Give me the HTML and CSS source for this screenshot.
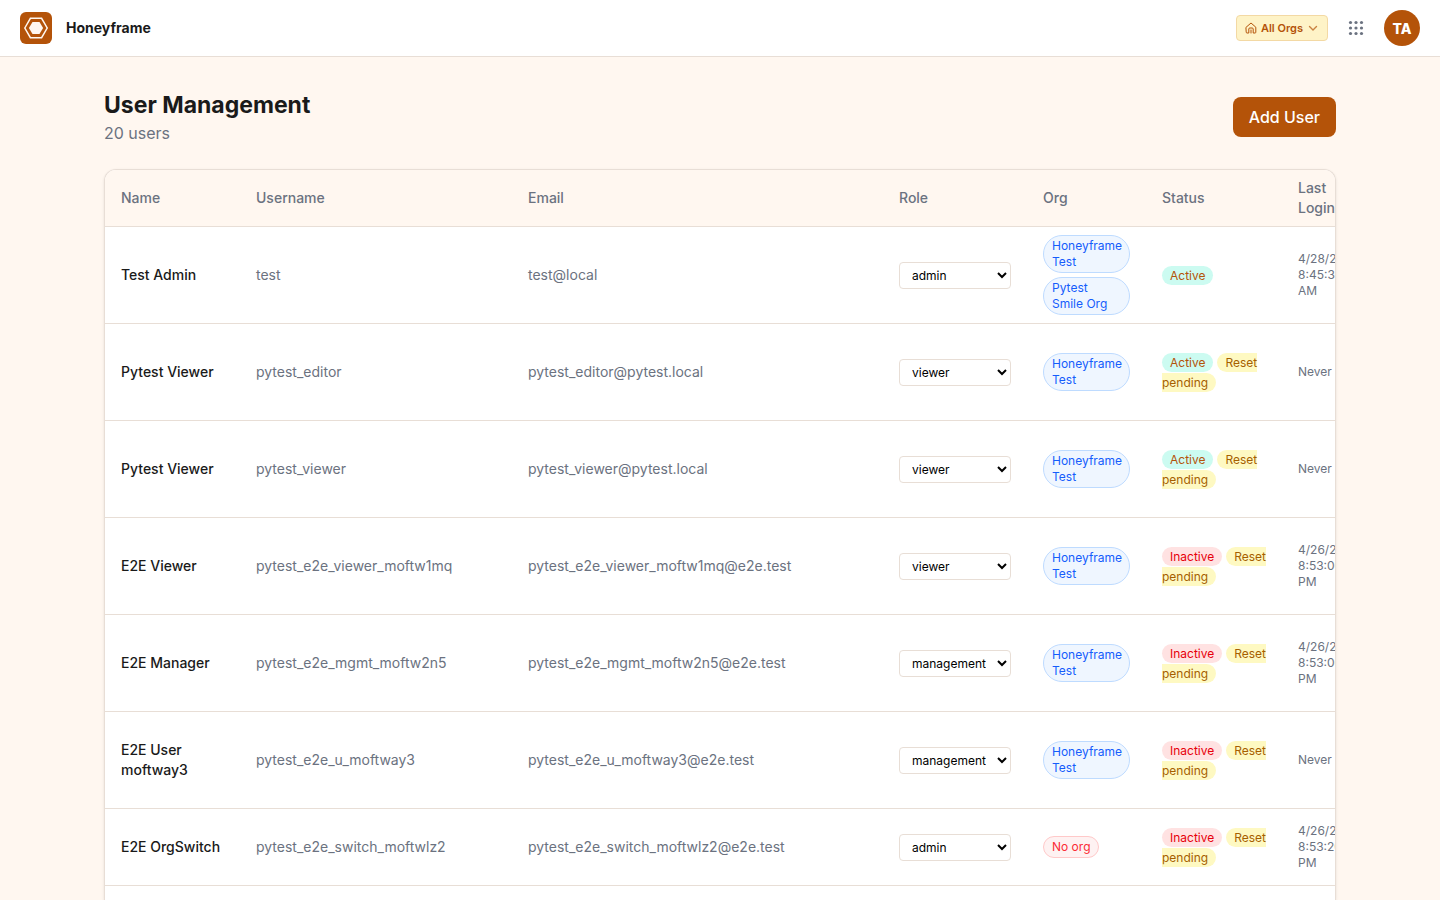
FILE: index.html
```html
<!DOCTYPE html>
<html lang="en">
<head>
<meta charset="utf-8">
<meta name="viewport" content="width=device-width, initial-scale=1">
<title>User Management</title>
<link rel="stylesheet" href="styles.css">
</head>
<body>
<header class="topbar">
  <div class="brand">
    <svg class="logo" viewBox="0 0 32 32" aria-hidden="true">
      <rect width="32" height="32" rx="6" fill="#b45309"/>
      <path d="M4.8 16 10.4 6.3H21.6L27.2 16 21.6 25.7H10.4Z" fill="none" stroke="#fff7f0" stroke-width="1.500"/>
      <path d="M8.9 16 12.5 10H19.5L23.1 16 19.5 22H12.5Z" fill="#fff7f0"/>
    </svg>
    <span class="brand-name">Honeyframe</span>
  </div>
  <div class="tools">
    <button class="org-switch" type="button">
      <svg class="icon" viewBox="0 0 12 12" fill="none" stroke="currentColor" stroke-linecap="round" stroke-linejoin="round" aria-hidden="true"><path d="M1.200 5.200 6 1l4.800 4.200V10.300a.7.7 0 0 1-.7.7H8.200V7a1 1 0 0 0-1-1H4.800a1 1 0 0 0-1 1v4H1.900a.7.7 0 0 1-.7-.7ZM6 8v3"/></svg>
      <span>All Orgs</span>
      <svg class="icon chevron" viewBox="0 0 12 12" fill="none" stroke="currentColor" stroke-width="1.400" stroke-linecap="round" stroke-linejoin="round" aria-hidden="true"><path d="m2.500 4.500 3.500 3.500 3.500-3.500"/></svg>
    </button>
    <button class="apps" type="button" aria-label="Apps">
      <svg viewBox="0 0 20 20" fill="currentColor" aria-hidden="true"><circle cx="4.500" cy="4.500" r="1.600"/><circle cx="10" cy="4.500" r="1.600"/><circle cx="15.500" cy="4.500" r="1.600"/><circle cx="4.500" cy="10" r="1.600"/><circle cx="10" cy="10" r="1.600"/><circle cx="15.500" cy="10" r="1.600"/><circle cx="4.500" cy="15.500" r="1.600"/><circle cx="10" cy="15.500" r="1.600"/><circle cx="15.500" cy="15.500" r="1.600"/></svg>
    </button>
    <button class="avatar" type="button">TA</button>
  </div>
</header>
<main class="page">
  <div class="page-head">
    <div>
      <h1>User Management</h1>
      <p class="count">20 users</p>
    </div>
    <button class="add" type="button">Add User</button>
  </div>
  <div class="card">
    <table class="users">
      <colgroup><col class="c-name"><col class="c-user"><col class="c-email"><col class="c-role"><col class="c-org"><col class="c-status"><col class="c-login"></colgroup>
      <thead>
        <tr><th>Name</th><th>Username</th><th>Email</th><th>Role</th><th>Org</th><th>Status</th><th>Last Login</th></tr>
      </thead>
      <tbody>
        <tr>
          <td class="name">Test Admin</td><td>test</td><td>test@local</td>
          <td><select aria-label="Role of Test Admin"><option selected>admin</option><option>management</option><option>viewer</option></select></td>
          <td><div class="orgs"><span class="org">Honeyframe Test</span><span class="org">Pytest Smile Org</span></div></td>
          <td><span class="tag active">Active</span></td>
          <td class="login">4/28/2026, 8:45:30 AM</td>
        </tr>
        <tr>
          <td class="name">Pytest Viewer</td><td>pytest_editor</td><td>pytest_editor@pytest.local</td>
          <td><select aria-label="Role of pytest_editor"><option>admin</option><option>management</option><option selected>viewer</option></select></td>
          <td><div class="orgs"><span class="org">Honeyframe Test</span></div></td>
          <td><span class="tag active">Active</span> <span class="tag reset">Reset pending</span></td>
          <td class="login">Never</td>
        </tr>
        <tr>
          <td class="name">Pytest Viewer</td><td>pytest_viewer</td><td>pytest_viewer@pytest.local</td>
          <td><select aria-label="Role of pytest_viewer"><option>admin</option><option>management</option><option selected>viewer</option></select></td>
          <td><div class="orgs"><span class="org">Honeyframe Test</span></div></td>
          <td><span class="tag active">Active</span> <span class="tag reset">Reset pending</span></td>
          <td class="login">Never</td>
        </tr>
        <tr>
          <td class="name">E2E Viewer</td><td>pytest_e2e_viewer_moftw1mq</td><td>pytest_e2e_viewer_moftw1mq@e2e.test</td>
          <td><select aria-label="Role of E2E Viewer"><option>admin</option><option>management</option><option selected>viewer</option></select></td>
          <td><div class="orgs"><span class="org">Honeyframe Test</span></div></td>
          <td><span class="tag inactive">Inactive</span> <span class="tag reset">Reset pending</span></td>
          <td class="login">4/26/2026, 8:53:00 PM</td>
        </tr>
        <tr>
          <td class="name">E2E Manager</td><td>pytest_e2e_mgmt_moftw2n5</td><td>pytest_e2e_mgmt_moftw2n5@e2e.test</td>
          <td><select aria-label="Role of E2E Manager"><option>admin</option><option selected>management</option><option>viewer</option></select></td>
          <td><div class="orgs"><span class="org">Honeyframe Test</span></div></td>
          <td><span class="tag inactive">Inactive</span> <span class="tag reset">Reset pending</span></td>
          <td class="login">4/26/2026, 8:53:00 PM</td>
        </tr>
        <tr>
          <td class="name">E2E User moftway3</td><td>pytest_e2e_u_moftway3</td><td>pytest_e2e_u_moftway3@e2e.test</td>
          <td><select aria-label="Role of E2E User moftway3"><option>admin</option><option selected>management</option><option>viewer</option></select></td>
          <td><div class="orgs"><span class="org">Honeyframe Test</span></div></td>
          <td><span class="tag inactive">Inactive</span> <span class="tag reset">Reset pending</span></td>
          <td class="login">Never</td>
        </tr>
        <tr class="short">
          <td class="name">E2E OrgSwitch</td><td>pytest_e2e_switch_moftwlz2</td><td>pytest_e2e_switch_moftwlz2@e2e.test</td>
          <td><select aria-label="Role of E2E OrgSwitch"><option selected>admin</option><option>management</option><option>viewer</option></select></td>
          <td><div class="orgs"><span class="org none">No org</span></div></td>
          <td><span class="tag inactive">Inactive</span> <span class="tag reset">Reset pending</span></td>
          <td class="login">4/26/2026, 8:53:20 PM</td>
        </tr>
      </tbody>
    </table>
  </div>
</main>
</body>
</html>
```

FILE: styles.css
```css
:root {
  --brand: #b45309;
  --cream: #fff7f0;
  --line: #e8ded6;
  --ink: #1a1a1a;
  --muted: #6b7280;
}
* { box-sizing: border-box; }
body {
  margin: 0;
  height: 100vh;
  overflow: hidden;
  display: flex;
  flex-direction: column;
  background: var(--cream);
  color: var(--ink);
  font-family: Inter, "Liberation Sans", sans-serif;
  font-size: 14px;
  line-height: 20px;
}
button, select { font-family: inherit; cursor: pointer; }

.topbar {
  flex: none;
  display: flex;
  align-items: center;
  justify-content: space-between;
  padding: 10px 20px;
  background: #fff;
  border-bottom: 1px solid var(--line);
}
.brand { display: flex; align-items: center; gap: 14px; }
.logo { width: 32px; height: 32px; }
.brand-name { font-weight: 700; }
.tools { display: flex; align-items: center; gap: 16px; }
.org-switch {
  display: flex;
  align-items: center;
  gap: 4px;
  height: 26px;
  padding: 0 8px;
  border: 1px solid #f3d9a4;
  border-radius: 4px;
  background: #fef3c7;
  color: var(--brand);
  font-size: 11px;
  font-weight: 600;
}
.icon { width: 12px; height: 12px; }
.chevron { opacity: .7; }
.apps {
  display: flex;
  padding: 2px;
  border: 0;
  background: none;
  color: var(--muted);
}
.apps svg { width: 20px; height: 20px; }
.avatar {
  width: 36px;
  height: 36px;
  padding: 0;
  border: 0;
  border-radius: 50%;
  background: var(--brand);
  color: #fff;
  font-size: 14px;
  font-weight: 800;
}

.page {
  flex: 1;
  min-height: 0;
  display: flex;
  flex-direction: column;
  width: 100%;
  max-width: 1280px;
  margin: 0 auto;
  padding: 32px 24px 0;
}
.page-head {
  display: flex;
  align-items: center;
  justify-content: space-between;
  margin-bottom: 24px;
}
h1 { margin: 0; font-size: 23px; line-height: 32px; font-weight: 700; }
.count { margin: 0; font-size: 16px; line-height: 24px; color: var(--muted); }
.add {
  height: 40px;
  padding: 0 16px;
  border: 0;
  border-radius: 8px;
  background: var(--brand);
  color: #fff;
  font-size: 16px;
  font-weight: 500;
}

.card {
  flex: 1;
  min-height: 0;
  overflow: hidden;
  background: #fff;
  border: 1px solid var(--line);
  border-bottom: 0;
  border-radius: 12px 12px 0 0;
  box-shadow: 0 1px 3px rgba(0, 0, 0, .1);
}
.users { width: 1267px; table-layout: fixed; border-collapse: separate; border-spacing: 0; }
.c-name { width: 135px; }
.c-user { width: 272px; }
.c-email { width: 371px; }
.c-role { width: 144px; }
.c-org { width: 119px; }
.c-status { width: 136px; }
th, td {
  padding: 8px 16px;
  border-bottom: 1px solid var(--line);
  text-align: left;
  vertical-align: middle;
  color: var(--muted);
}
th { background: var(--cream); font-weight: 500; }
td { height: 97px; }
.short td { height: 77px; }
td.name { color: var(--ink); font-weight: 500; }
.login { font-size: 12px; line-height: 16px; }
select {
  display: block;
  width: 112px;
  height: 27px;
  padding: 4px 8px;
  border: 1px solid var(--line);
  border-radius: 4px;
  background: #fff;
  color: #000;
  font-size: 12px;
}
.orgs { display: flex; flex-wrap: wrap; gap: 4px; }
.org {
  max-width: 100%;
  padding: 2px 8px;
  border: 1px solid #bedbff;
  border-radius: 20px;
  background: #eff6ff;
  color: #155dfc;
  font-size: 12px;
  line-height: 16px;
}
.org.none { border-color: #ffc9c9; background: #fef2f2; color: #fb2c36; }
.tag { padding: 2px 8px; border-radius: 20px; font-size: 12px; line-height: 16px; }
.active { background: #ccfbf1; color: var(--brand); }
.inactive { background: #ffe2e2; color: #e7000b; }
.reset { background: #fef9c2; color: #a65f00; }
```
